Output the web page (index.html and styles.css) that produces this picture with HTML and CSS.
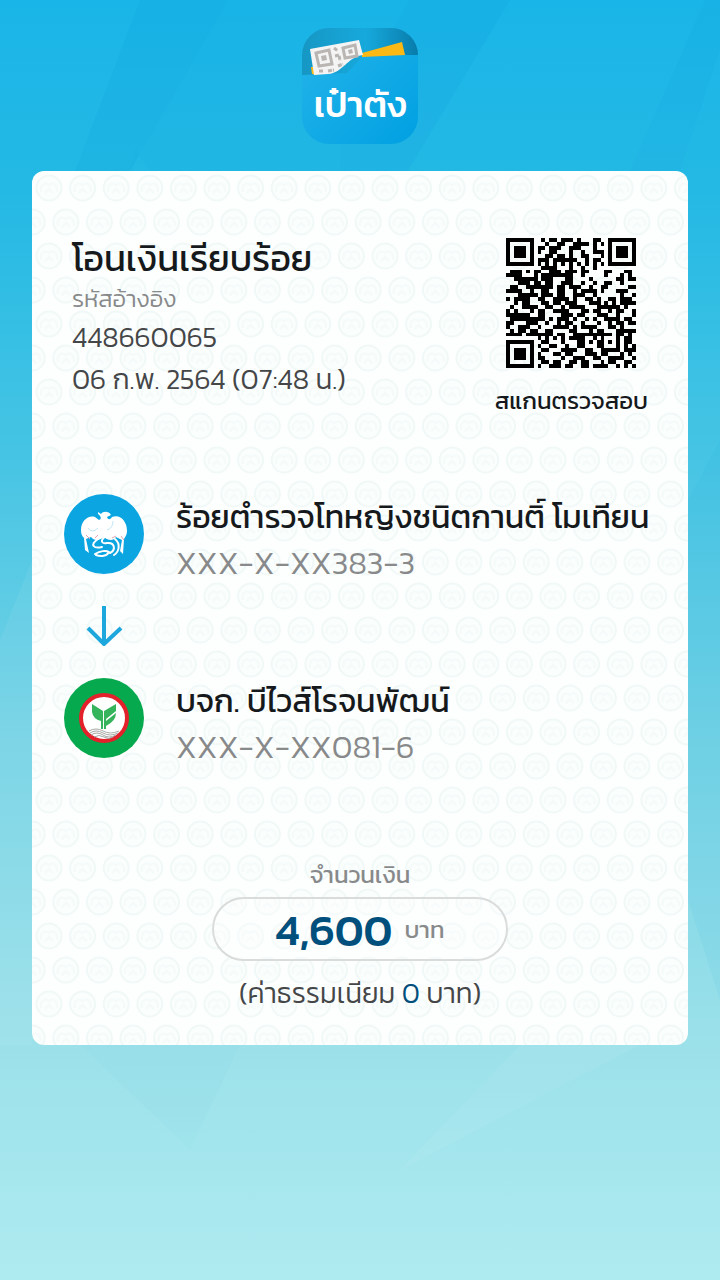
FILE: index.html
```
<!DOCTYPE html>
<html lang="th">
<head>
    <meta charset="UTF-8">
    <meta name="viewport" content="width=device-width, initial-scale=1">
    <title>โอนเงินเรียบร้อย</title>
    <link rel="stylesheet" href="styles.css">
</head>
<body>
    <!-- Background facets -->
    <svg class="backdrop" viewBox="0 0 720 1280" preserveAspectRatio="none" aria-hidden="true">
        <path d="M140 0H228L130 171H75Z" fill="#0898d8" opacity=".13"/>
        <path d="M228 0H410L340 120V171H150L135 150L130 171Z" fill="#0898d8" opacity=".06"/>
        <path d="M410 0H510L408 171H340V120Z" fill="#0898d8" opacity=".12"/>
        <path d="M720 0H705L630 171H680L720 50Z" fill="#0898d8" opacity=".08"/>
        <path d="M0 640L32 560V1045H0Z" fill="#fff" opacity=".06"/>
        <path d="M688 500L720 440V1000L688 900Z" fill="#0898d8" opacity=".05"/>
        <path d="M80 1045L190 1150L240 1045Z" fill="#0898d8" opacity=".02"/>
        <path d="M400 1170L520 1045H640Z" fill="#fff" opacity=".05"/>
    </svg>

    <main class="page">
        <header class="app-logo">
            <svg class="logo-art" viewBox="0 0 116 116" aria-hidden="true">
                <defs>
                    <linearGradient id="wallet" x1="0" y1="0" x2="1" y2="1">
                        <stop offset="0" stop-color="#26b5ea"/>
                        <stop offset="1" stop-color="#00a0e2"/>
                    </linearGradient>
                    <linearGradient id="pocket" x1="0" y1="0" x2="1" y2="0">
                        <stop offset="0" stop-color="#1697c4"/>
                        <stop offset=".55" stop-color="#17a9dc"/>
                        <stop offset="1" stop-color="#087cab"/>
                    </linearGradient>
                </defs>
                <rect width="116" height="116" rx="27" fill="url(#wallet)"/>
                <path d="M0 47V27A27 27 0 0 1 27 0H89A27 27 0 0 1 116 27H62L45 45Z" fill="url(#pocket)"/>
                <path d="M60 25L100 14L103 27L60 29ZM9 39H15V47L10 46Z" fill="#fdb913"/>
                <path d="M8 21L57 12L61 27C45 29 41 45 26 46L12 47Z" fill="#f4f4f4"/>
                <g fill="none" stroke="#b9b5b3" stroke-width="3">
                    <path d="M14 25L27 22L30 36L17 38ZM41 20L53 17L55 28L43 30Z"/>
                    <path d="M32 20L36 23M33 28L37 27L38 33M17 43H22M26 43L32 42M36 38L41 36" stroke-dasharray="4 1"/>
                </g>
                <path d="M19 28L24 27L25 32L20 33ZM46 22L50 21L51 25L47 26Z" fill="#b9b5b3"/>
            </svg>
            <span class="logo-name">เป๋าตัง</span>
        </header>

        <section class="slip">
            <div class="slip-head">
                <div class="slip-info">
                    <h1>โอนเงินเรียบร้อย</h1>
                    <p class="ref-label">รหัสอ้างอิง</p>
                    <p class="ref-value">448660065</p>
                    <p class="slip-date">06 ก.พ. 2564 (07:48 น.)</p>
                </div>
                <div class="slip-qr">
                    <svg id="qrCode" viewBox="0 0 33 33" role="img" aria-label="QR" shape-rendering="crispEdges"></svg>
                    <p>สแกนตรวจสอบ</p>
                </div>
            </div>

            <div class="transfer">
                <div class="party">
                    <svg class="bank-icon" viewBox="0 0 80 80" aria-hidden="true">
                        <circle cx="40" cy="40" r="40" fill="#0ba5e2"/>
                        <path d="M34 18L37 20C39 17 45 17 47 21L43 23C44 26 46 26 48 23C57 20 63 28 63 37C63 41 61 43 60 45L59 60L56 57L58 46L52 43C50 47 44 47 40 43C35 47 30 47 27 43L22 45L25 59L21 56L20 44C18 42 17 40 17 36C17 27 24 21 31 23L35 26C38 25 37 22 34 20Z" fill="#fff"/>
                        <g fill="none" stroke="#fff" stroke-width="2" stroke-linecap="round">
                            <path d="M42 42C35 47 38 50 43 49C51 48 52 56 46 59M34 45C25 51 30 55 38 53M31 60C36 57 42 56 45 58C43 62 37 63 32 61M51 45C57 50 55 58 50 61"/>
                        </g>
                        <path d="M22 41L26 45M31 44L34 41M48 44L52 42M57 42L60 46" stroke="#e6a3ae" stroke-width="1"/>
                        <path d="M24 34Q28 40 34 34M49 27Q49 34 43 36" fill="none" stroke="#bfe6f6" stroke-width="1"/>
                    </svg>
                    <div class="party-text">
                        <h2>ร้อยตำรวจโทหญิงชนิตกานติ์ โมเทียน</h2>
                        <p>XXX-X-XX383-3</p>
                    </div>
                </div>

                <svg class="arrow" viewBox="0 0 80 40" aria-hidden="true">
                    <path d="M40 0V38M24 22L40 38L57 22" fill="none" stroke="#1ea7dc" stroke-width="4"/>
                </svg>

                <div class="party">
                    <svg class="bank-icon" viewBox="0 0 80 80" aria-hidden="true">
                        <circle cx="40" cy="40" r="40" fill="#06a94d"/>
                        <circle cx="40" cy="40" r="23" fill="#fff" stroke="#e2212b" stroke-width="4"/>
                        <path d="M28 26L39 33V51H37V43Q29 41 28 34ZM52 26V33L42 41V51H40V33ZM52 35Q52 43 42 48V43Z" fill="#36b45c"/>
                        <g fill="none" stroke="#a7a9a5" stroke-width="1">
                            <path d="M25 53Q32 49 39 53T55 53M26 55Q32 51 39 55T54 55M27 57Q33 53 39 57T52 57M30 59Q35 56 40 59T49 59"/>
                        </g>
                    </svg>
                    <div class="party-text">
                        <h2>บจก. บีไวส์โรจนพัฒน์</h2>
                        <p>XXX-X-XX081-6</p>
                    </div>
                </div>
            </div>

            <div class="amount">
                <p class="amount-label">จำนวนเงิน</p>
                <div class="amount-box">
                    <strong>4,600</strong>
                    <span>บาท</span>
                </div>
                <p class="fee">(ค่าธรรมเนียม <b>0</b> บาท)</p>
            </div>
        </section>
    </main>

    <script>
    const qrRows = [
        '111111100101101110100011001111111',
        '100000100010011001111010101000001',
        '101110101101110011100010001011101',
        '101110101001100010010011101011101',
        '101110100011011010011000101011101',
        '100000101110111111001011001000001',
        '111111101010101010101010101111111',
        '000000000111100010010010000000000',
        '011101011001110111011000011000110',
        '111100010111111110010000010001010',
        '001111110111000110000100000011011',
        '000111011011001110010010011001000',
        '011001111111011011100100110000011',
        '111100100110011001011110100011100',
        '000111110111011001110010000001001',
        '101111001100111101001101001101110',
        '001011000110110111000111010101111',
        '010011110011001011110001111110100',
        '101000101100111100011011001011001',
        '111111001100001110110001110010001',
        '011111111101011101001010011110110',
        '110001110010010110010001001011011',
        '100111001000111101011110001101000',
        '010110110011000011000101100011111',
        '111101111111011001111111111011010',
        '000000001010101011110010100010110',
        '111111100110001000110101101010110',
        '100000101001100100110001100010101',
        '101110100110001111001100111110111',
        '101110101000110110001110110001010',
        '101110101100001001110011001111001',
        '100000100110110011011000101100110',
        '111111101001110110011011110010101'
    ];

    // One path made of horizontal runs of dark modules
    function drawQr(svg, rows) {
        let d = '';
        rows.forEach((row, y) => {
            for (const run of row.matchAll(/1+/g)) {
                d += `M${run.index} ${y}h${run[0].length}v1h-${run[0].length}z`;
            }
        });
        const path = document.createElementNS('http://www.w3.org/2000/svg', 'path');
        path.setAttribute('d', d);
        svg.appendChild(path);
    }

    drawQr(document.getElementById('qrCode'), qrRows);
    </script>
</body>
</html>
```
FILE: styles.css
```
:root {
    --text-dark: #16191c;
    --text-body: #444648;
    --text-muted: #88898a;
    --navy: #004f7c;
}

* {
    box-sizing: border-box;
    margin: 0;
    padding: 0;
}

body {
    position: relative;
    min-height: 100vh;
    font-family: 'Kanit', 'Prompt', 'Noto Sans Thai', 'Noto Sans', sans-serif;
    font-kerning: none;
    color: var(--text-dark);
    background: linear-gradient(180deg, #1ab5e8 0%, #24b9e4 15%, #45c4e4 35%, #75d3e5 58%, #9ce1ea 82%, #aeebf0 100%);
}

.backdrop {
    position: absolute;
    inset: 0;
    width: 100%;
    height: 100%;
}

.page {
    position: relative;
    padding: 28px 32px;
}

.app-logo {
    position: relative;
    width: 116px;
    height: 116px;
    margin: 0 auto 27px;
}

.logo-art {
    display: block;
    width: 100%;
}

.logo-name {
    position: absolute;
    left: 0;
    right: 0;
    top: 50px;
    line-height: 52px;
    font-size: 36px;
    font-weight: 500;
    text-align: center;
    color: white;
}

.slip {
    border-radius: 12px;
    padding: 64px 32px 32px;
    background-color: #fdfffe;
    background-image: url("data:image/svg+xml,%3Csvg xmlns='http://www.w3.org/2000/svg' xmlns:xlink='http://www.w3.org/1999/xlink' width='168' height='68' viewBox='0 0 168 68'%3E%3Cdefs%3E%3Cg id='c' fill='none' stroke='%23f1f8f8' stroke-width='2'%3E%3Ccircle r='12.5' fill='%23fafefd'/%3E%3Cpath d='M-8 4C-9-4-4-6 0-3C4-6 9-4 8 4M-4 5L0 1L4 5' stroke='%23f5fafa'/%3E%3C/g%3E%3Cg id='r'%3E%3Cuse xlink:href='%23c' x='17'/%3E%3Cuse xlink:href='%23c' x='50.6'/%3E%3Cuse xlink:href='%23c' x='84.2'/%3E%3Cuse xlink:href='%23c' x='117.8'/%3E%3Cuse xlink:href='%23c' x='151.4'/%3E%3C/g%3E%3C/defs%3E%3Cuse xlink:href='%23r' y='17'/%3E%3Cuse xlink:href='%23r' x='16.8' y='51'/%3E%3Cuse xlink:href='%23r' x='-151.2' y='51'/%3E%3C/svg%3E");
}

.slip-head {
    display: flex;
    justify-content: space-between;
    padding: 0 8px;
}

h1 {
    line-height: 46px;
    font-size: 36px;
    font-weight: 400;
}

.ref-label {
    line-height: 36px;
    font-size: 24px;
    font-weight: 300;
    color: var(--text-muted);
}

.ref-value,
.slip-date {
    line-height: 44px;
    font-size: 28px;
    font-weight: 300;
    color: var(--text-body);
}

.ref-value {
    line-height: 40px;
}

.slip-qr {
    display: flex;
    flex-direction: column;
    align-items: center;
    padding-top: 3px;
    font-size: 24px;
    line-height: 32px;
}

.slip-qr svg {
    width: 130px;
    height: 130px;
    margin-bottom: 17px;
}

.transfer {
    display: flex;
    flex-direction: column;
    gap: 20px;
    margin-top: 77px;
}

.party {
    display: flex;
    gap: 32px;
}

.bank-icon {
    flex: none;
    width: 80px;
    height: 80px;
}

.arrow {
    width: 80px;
    height: 40px;
    margin-bottom: 12px;
}

.party-text h2 {
    line-height: 46px;
    font-size: 32px;
    font-weight: 400;
    white-space: nowrap;
}

.party-text p {
    line-height: 46px;
    font-size: 32px;
    font-weight: 300;
    color: var(--text-muted);
}

.amount {
    display: flex;
    flex-direction: column;
    align-items: center;
    margin-top: 87px;
}

.amount-label {
    margin-bottom: 4px;
    line-height: 36px;
    font-size: 24px;
    color: var(--text-muted);
}

.amount-box {
    display: flex;
    align-items: center;
    justify-content: center;
    gap: 12px;
    width: 50%;
    height: 64px;
    border: 2px solid #dadcdc;
    border-radius: 32px;
    background-color: rgba(255, 255, 255, 0.3);
}

.amount-box strong {
    font-size: 44px;
    font-weight: 500;
    color: var(--navy);
}

.amount-box span {
    font-size: 24px;
    color: var(--text-muted);
}

.fee {
    margin-top: 12px;
    line-height: 40px;
    font-size: 28px;
    font-weight: 300;
    color: var(--text-body);
}

.fee b {
    font-weight: 300;
    color: var(--navy);
}
```
